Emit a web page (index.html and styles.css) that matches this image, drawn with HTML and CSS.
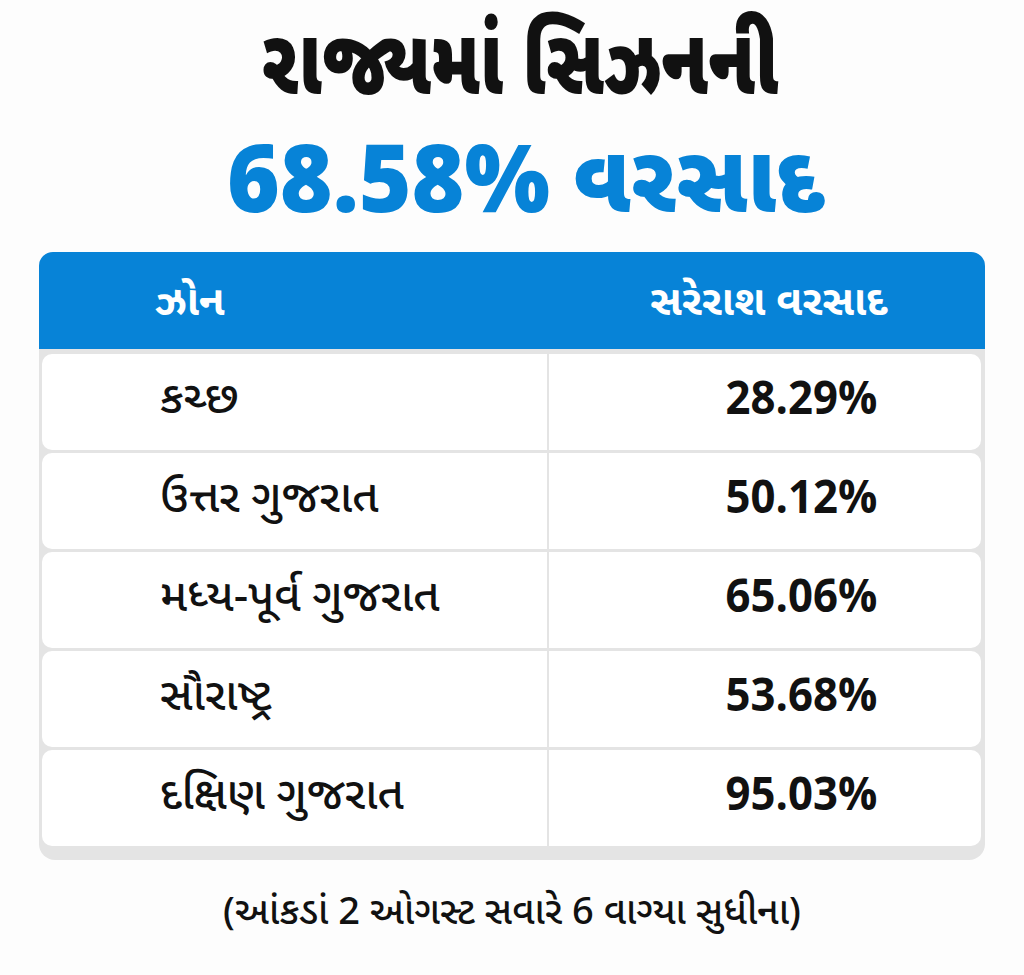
FILE: index.html
```html
<!DOCTYPE html>
<html lang="gu">
<head>
<meta charset="utf-8">
<title>રાજ્યમાં સિઝનની 68.58% વરસાદ</title>
<link rel="stylesheet" href="styles.css">
</head>
<body>
<main class="page">
  <h1 class="title">
    <span class="title-line">રાજ્યમાં સિઝનની</span>
    <span class="title-line title-blue">68.58% વરસાદ</span>
  </h1>
  <section class="table">
    <div class="table-head">
      <div class="head-zone">ઝોન</div>
      <div class="head-rain">સરેરાશ વરસાદ</div>
    </div>
    <div class="table-body">
      <div class="row"><div class="cell zone">કચ્છ</div><div class="cell value"><span class="num">28.29%</span></div></div>
      <div class="row"><div class="cell zone">ઉત્તર ગુજરાત</div><div class="cell value"><span class="num">50.12%</span></div></div>
      <div class="row"><div class="cell zone">મધ્ય-પૂર્વ ગુજરાત</div><div class="cell value"><span class="num">65.06%</span></div></div>
      <div class="row"><div class="cell zone">સૌરાષ્ટ્ર</div><div class="cell value"><span class="num">53.68%</span></div></div>
      <div class="row"><div class="cell zone">દક્ષિણ ગુજરાત</div><div class="cell value"><span class="num">95.03%</span></div></div>
    </div>
  </section>
  <p class="note">(આંકડાં 2 ઓગસ્ટ સવારે 6 વાગ્યા સુધીના)</p>
</main>
</body>
</html>
```

FILE: styles.css
```css
* { box-sizing: border-box; }
html, body { margin: 0; padding: 0; }
body {
  background: #fdfdfd;
  font-family: "Noto Sans Gujarati", "Noto Sans", "DejaVu Sans", sans-serif;
  color: #111;
  width: 1024px;
  height: 975px;
  overflow: hidden;
}
.page {
  padding: 13px 39px 0 39px;
  display: flex;
  flex-direction: column;
}
.title {
  margin: 0;
  display: flex;
  flex-direction: column;
  align-items: center;
  font-weight: 900;
}
.title-line {
  font-size: 92px;
  line-height: 118px;
  color: #111;
  transform: scaleX(0.8);
  padding-left: 20px;
}
.title-blue {
  color: #0783d7;
  font-size: 94px;
  line-height: 117px;
  transform: scaleX(0.96);
  padding-left: 28px;
}
.table {
  margin-top: 4px;
  width: 946px;
}
.table-head {
  background: #0783d7;
  border-radius: 14px 14px 0 0;
  height: 97px;
  display: grid;
  grid-template-columns: 508px 1fr;
  align-items: center;
  color: #fff;
  font-weight: 700;
  font-size: 42px;
  padding-top: 8px;
}
.head-zone { padding-left: 116px; }
.head-rain { padding-left: 103px; }
.table-body {
  background: #e4e4e4;
  padding: 5px 4px 14px 3px;
  border-radius: 0 0 16px 16px;
  display: flex;
  flex-direction: column;
  gap: 3px;
}
.row {
  display: grid;
  grid-template-columns: 505px 1fr;
  gap: 2px;
  height: 96px;
}
.cell {
  background: #fff;
  display: flex;
  align-items: center;
  font-size: 45px;
  font-weight: 500;
}
.zone {
  border-radius: 10px 0 0 10px;
  padding-left: 118px;
}
.value {
  border-radius: 0 10px 10px 0;
  justify-content: flex-end;
  padding-right: 104px;
}
.num {
  font-weight: 700;
  font-size: 47px;
  transform: scaleX(0.93);
  transform-origin: right center;
}
.note {
  margin: 30px 0 0 0;
  text-align: center;
  font-size: 38px;
  font-weight: 500;
}
```
